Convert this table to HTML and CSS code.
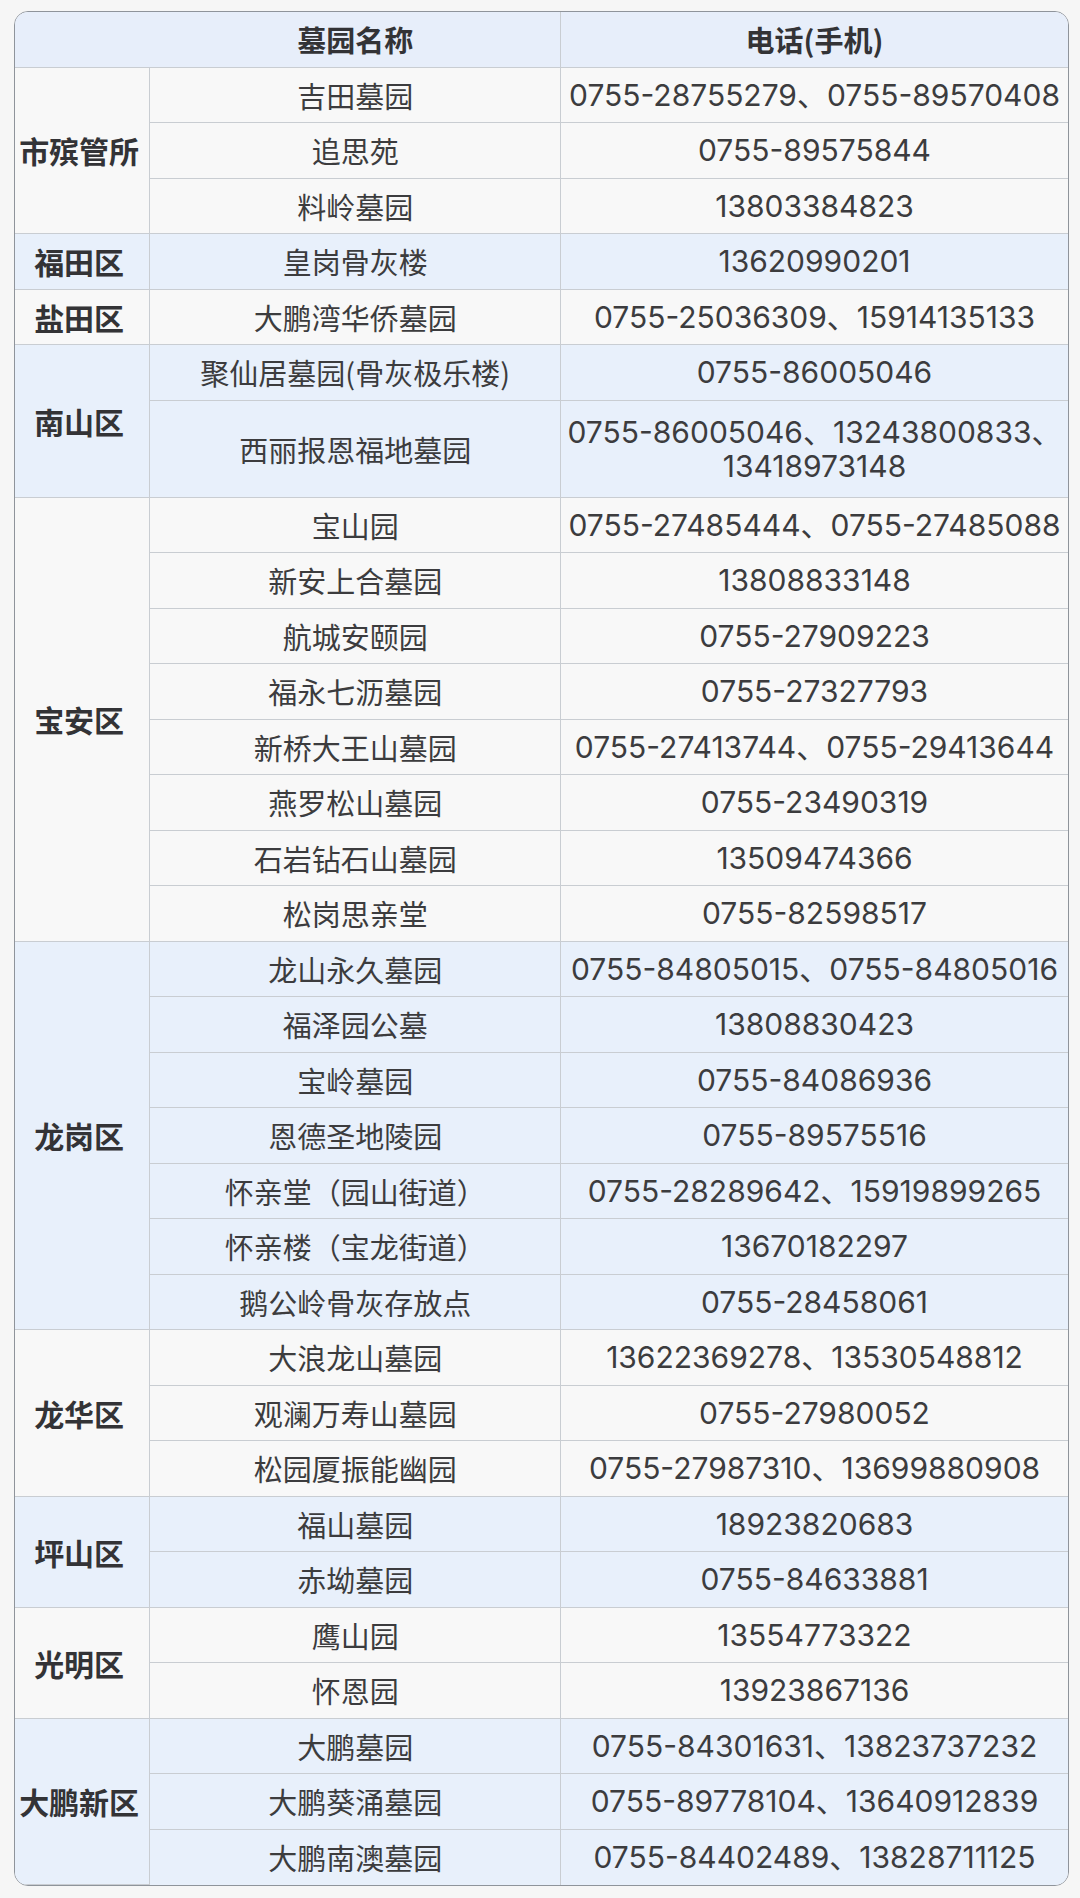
FILE: index.html
```html
<!DOCTYPE html>
<html lang="zh-CN">
<head>
<meta charset="utf-8">
<title>深圳墓园电话</title>
<link rel="stylesheet" href="styles.css">
</head>
<body>
<div class="frame">
<table class="grid">
  <colgroup><col class="c-area"><col class="c-name"><col class="c-tel"></colgroup>
  <thead>
    <tr class="head"><th></th><th>墓园名称</th><th class="last">电话(手机)</th></tr>
  </thead>
  <tbody>
    <tr class="w"><th rowspan="3">市殡管所</th><td>吉田墓园</td><td class="tel">0755-28755279、0755-89570408</td></tr>
    <tr class="w"><td>追思苑</td><td class="tel">0755-89575844</td></tr>
    <tr class="w"><td>料岭墓园</td><td class="tel">13803384823</td></tr>

    <tr class="b"><th>福田区</th><td>皇岗骨灰楼</td><td class="tel">13620990201</td></tr>

    <tr class="w"><th>盐田区</th><td>大鹏湾华侨墓园</td><td class="tel">0755-25036309、15914135133</td></tr>

    <tr class="b"><th rowspan="2">南山区</th><td>聚仙居墓园(骨灰极乐楼)</td><td class="tel">0755-86005046</td></tr>
    <tr class="b tall"><td>西丽报恩福地墓园</td><td class="tel">0755-86005046、13243800833、<br>13418973148</td></tr>

    <tr class="w"><th rowspan="8">宝安区</th><td>宝山园</td><td class="tel">0755-27485444、0755-27485088</td></tr>
    <tr class="w"><td>新安上合墓园</td><td class="tel">13808833148</td></tr>
    <tr class="w"><td>航城安颐园</td><td class="tel">0755-27909223</td></tr>
    <tr class="w"><td>福永七沥墓园</td><td class="tel">0755-27327793</td></tr>
    <tr class="w"><td>新桥大王山墓园</td><td class="tel">0755-27413744、0755-29413644</td></tr>
    <tr class="w"><td>燕罗松山墓园</td><td class="tel">0755-23490319</td></tr>
    <tr class="w"><td>石岩钻石山墓园</td><td class="tel">13509474366</td></tr>
    <tr class="w"><td>松岗思亲堂</td><td class="tel">0755-82598517</td></tr>

    <tr class="b"><th rowspan="7">龙岗区</th><td>龙山永久墓园</td><td class="tel">0755-84805015、0755-84805016</td></tr>
    <tr class="b"><td>福泽园公墓</td><td class="tel">13808830423</td></tr>
    <tr class="b"><td>宝岭墓园</td><td class="tel">0755-84086936</td></tr>
    <tr class="b"><td>恩德圣地陵园</td><td class="tel">0755-89575516</td></tr>
    <tr class="b"><td>怀亲堂（园山街道）</td><td class="tel">0755-28289642、15919899265</td></tr>
    <tr class="b"><td>怀亲楼（宝龙街道）</td><td class="tel">13670182297</td></tr>
    <tr class="b"><td>鹅公岭骨灰存放点</td><td class="tel">0755-28458061</td></tr>

    <tr class="w"><th rowspan="3">龙华区</th><td>大浪龙山墓园</td><td class="tel">13622369278、13530548812</td></tr>
    <tr class="w"><td>观澜万寿山墓园</td><td class="tel">0755-27980052</td></tr>
    <tr class="w"><td>松园厦振能幽园</td><td class="tel">0755-27987310、13699880908</td></tr>

    <tr class="b"><th rowspan="2">坪山区</th><td>福山墓园</td><td class="tel">18923820683</td></tr>
    <tr class="b"><td>赤坳墓园</td><td class="tel">0755-84633881</td></tr>

    <tr class="w"><th rowspan="2">光明区</th><td>鹰山园</td><td class="tel">13554773322</td></tr>
    <tr class="w"><td>怀恩园</td><td class="tel">13923867136</td></tr>

    <tr class="b"><th rowspan="3">大鹏新区</th><td>大鹏墓园</td><td class="tel">0755-84301631、13823737232</td></tr>
    <tr class="b"><td>大鹏葵涌墓园</td><td class="tel">0755-89778104、13640912839</td></tr>
    <tr class="b"><td>大鹏南澳墓园</td><td class="tel">0755-84402489、13828711125</td></tr>
  </tbody>
</table>
</div>
</body>
</html>
```

FILE: styles.css
```css
html, body {
  margin: 0;
  padding: 0;
  background: #f6f6f6;
}

body {
  padding: 11px 13px 0 14px;
  font-family: "Noto Sans CJK SC", "Noto Sans", sans-serif;
  color: #3c3c3e;
}

.frame {
  width: 1053px;
  border: 1px solid #8f949b;
  border-radius: 14px;
  overflow: hidden;
  background: #f8f8f8;
}

.grid {
  width: 100%;
  border-collapse: separate;
  border-spacing: 0;
  table-layout: fixed;
}

.c-area { width: 135px; }
.c-name { width: 410px; }
.c-tel { width: 506px; }

.grid tr { height: 55.5px; }
.grid tr.tall { height: 97px; }

.grid th,
.grid td {
  padding: 0;
  text-align: center;
  vertical-align: middle;
  border-right: 1px solid #c9cdd2;
  border-bottom: 1px solid #c9cdd2;
  line-height: 34px;
}

.grid td.tel,
.grid th.last { border-right: none; }

.grid tbody tr:last-child td,
.grid tbody tr:last-child th { border-bottom: none; }

.grid th {
  font-weight: 700;
  font-size: 30px;
  color: #333336;
}

.grid tbody th {
  padding-right: 6px;
}

.grid td {
  font-size: 29px;
  font-weight: 400;
}

.grid td.tel {
  font-family: "Inter", "Noto Sans CJK SC", sans-serif;
  font-size: 30px;
  white-space: nowrap;
}

.head th {
  background: #e7eefa;
  font-size: 29px;
}

.head th:first-child { border-right: none; }

.w th, .w td { background: #f8f8f8; }
.b th, .b td { background: #e8f0fb; }
```
